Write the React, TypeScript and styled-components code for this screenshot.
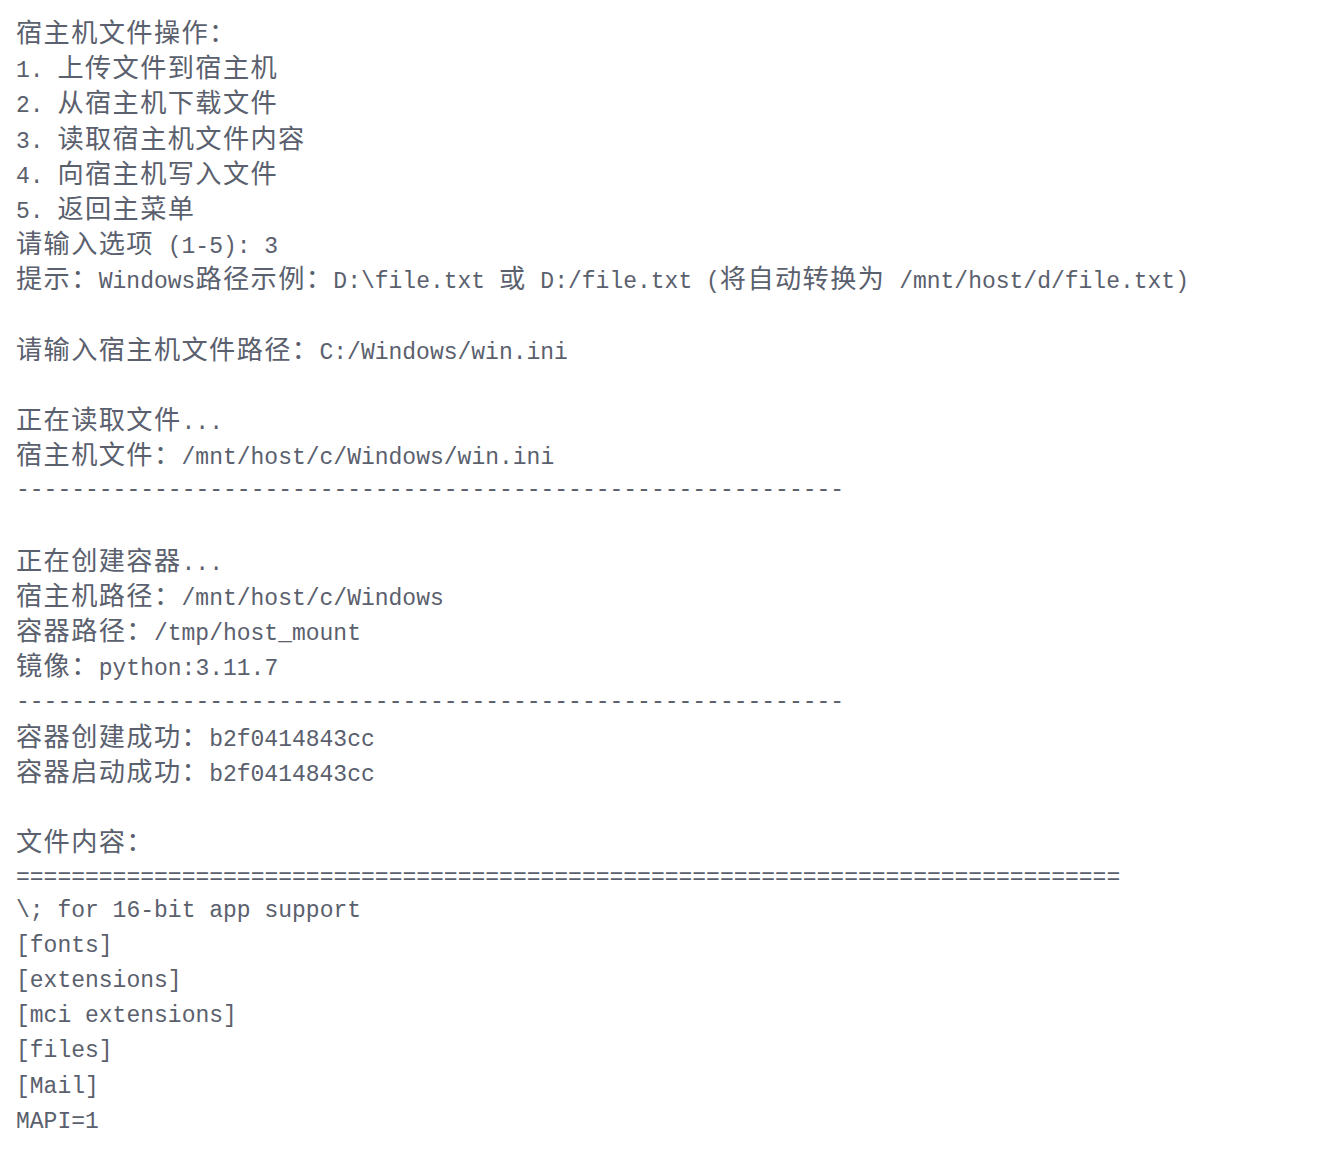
import React from "react";
import styled, { createGlobalStyle } from "styled-components";

const Global = createGlobalStyle`
  html, body { margin: 0; padding: 0; background: #ffffff; }
`;

const Terminal = styled.div`
  padding: 14px 16px 20px 16px;
  background: #ffffff;
  color: #5a606d;
  font-family: "Liberation Mono", "DejaVu Sans Mono", monospace;
  font-size: 23px;
`;

const Line = styled.div`
  height: 35.2px;
  line-height: 35.2px;
  white-space: pre;
`;

const Wide = styled.span`
  font-family: "Noto Sans CJK SC", "Noto Sans CJK JP", sans-serif;
  font-size: 26.2px;
  letter-spacing: 1.4px;
  line-height: 35.2px;
`;

const Rule = styled.span`
  position: relative;
  top: 2px;
`;

const lines: string[] = [
  "宿主机文件操作：",
  "1. 上传文件到宿主机",
  "2. 从宿主机下载文件",
  "3. 读取宿主机文件内容",
  "4. 向宿主机写入文件",
  "5. 返回主菜单",
  "请输入选项 (1-5): 3",
  "提示：Windows路径示例：D:\\file.txt 或 D:/file.txt (将自动转换为 /mnt/host/d/file.txt)",
  "",
  "请输入宿主机文件路径：C:/Windows/win.ini",
  "",
  "正在读取文件...",
  "宿主机文件：/mnt/host/c/Windows/win.ini",
  "-".repeat(60),
  "",
  "正在创建容器...",
  "宿主机路径：/mnt/host/c/Windows",
  "容器路径：/tmp/host_mount",
  "镜像：python:3.11.7",
  "-".repeat(60),
  "容器创建成功：b2f0414843cc",
  "容器启动成功：b2f0414843cc",
  "",
  "文件内容：",
  "=".repeat(80),
  "\\; for 16-bit app support",
  "[fonts]",
  "[extensions]",
  "[mci extensions]",
  "[files]",
  "[Mail]",
  "MAPI=1",
];

const wideRe = /([\u3000-\u303f\u3400-\u9fff\uff00-\uffef]+)/;

function renderLine(text: string) {
  if (!text) return "\u00a0";
  if (/^[-=]+$/.test(text)) return <Rule>{text}</Rule>;
  return text.split(wideRe).map((part, i) =>
    wideRe.test(part) ? <Wide key={i}>{part}</Wide> : <React.Fragment key={i}>{part}</React.Fragment>
  );
}

export default function App() {
  return (
    <>
      <Global />
      <Terminal>
        {lines.map((l, i) => (
          <Line key={i}>{renderLine(l)}</Line>
        ))}
      </Terminal>
    </>
  );
}
